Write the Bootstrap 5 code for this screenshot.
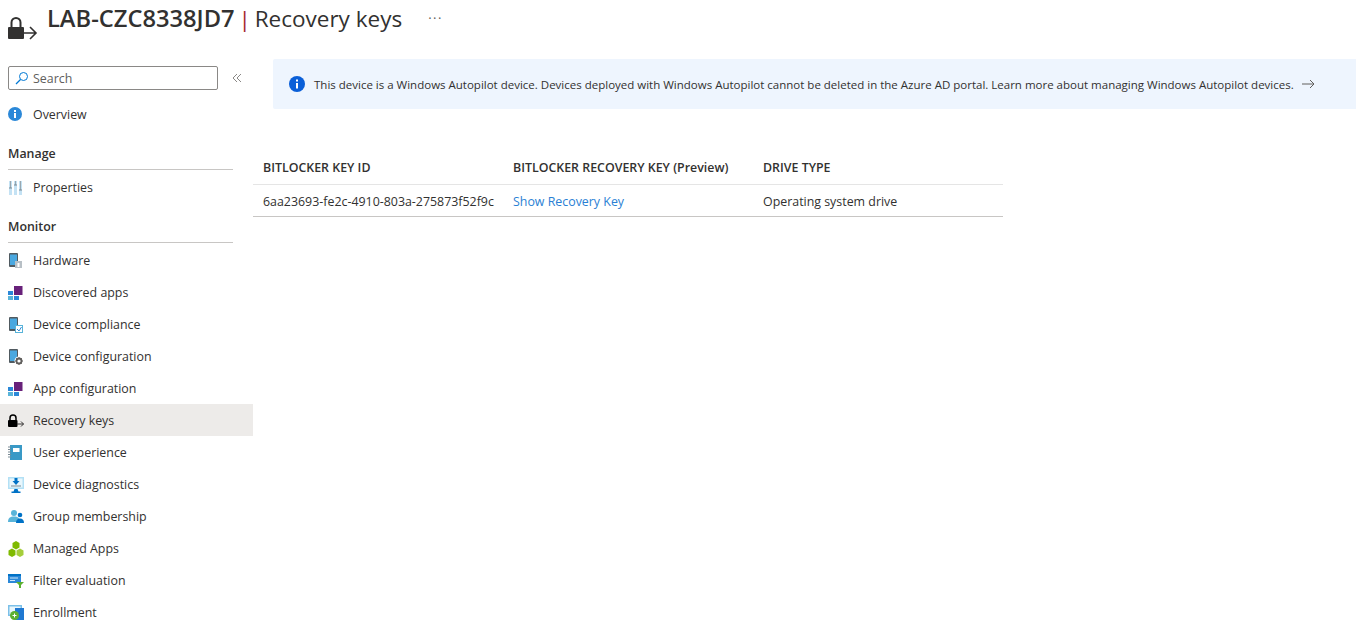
<!DOCTYPE html>
<html lang="en">
<head>
    <meta charset="UTF-8">
    <title>LAB-CZC8338JD7 | Recovery keys</title>
    <link href="https://cdn.jsdelivr.net/npm/bootstrap@5.3.0/dist/css/bootstrap.min.css" rel="stylesheet">
    <style>
        html, body { height: 634px; overflow: hidden; }
        body { font-family: "Open Sans", "Liberation Sans", sans-serif; font-size: 12.4px; color: #323130; background: #fff; }
        .page-head { height: 59px; padding-left: 8px; }
        .head-icon { width: 30px; height: 30px; margin-top: 16px; margin-right: 9px; }
        .head-title { font-size: 22.5px; line-height: 30px; margin: 3px 0 0; font-weight: 400; color: #323130; }
        .head-title b { font-weight: 600; font-size: 23.7px; }
        .head-sep { color: #a4262c; margin: 0 -2px; }
        .head-more { margin: 8px 0 0 26px; font-size: 13px; line-height: 20px; color: #605e5c; letter-spacing: 1.5px; }
        .side { width: 253px; flex: none; }
        .search-row { padding: 7px 0 0 8px; height: 39px; }
        .search-box { width: 210px; height: 24px; border: 1px solid #8a8886; border-radius: 2px; padding: 3px 0 0 6px; color: #605e5c; }
        .search-box svg { margin-top: -3px; }
        .collapse-btn { width: 15px; margin-left: 12px; color: #8a8886; }
        .nav-row.list-group-item { height: 32px; padding: 3px 0 0 8px; color: #323130; border: 0; border-radius: 0; background: transparent; }
        .nav-row.is-on { background: #edebe9; }
        .nav-row svg { width: 16px; height: 16px; margin-right: 9px; margin-top: -2px; flex: none; }
        .nav-head { font-weight: 600; margin: 0 20px 1px 8px; height: 40px; line-height: 20px; padding-top: 14px; border-bottom: 1px solid #c8c6c4; }
        .main-pane { flex: 1; min-width: 0; }
        .info-bar { margin-left: 20px; height: 50px; background: #eef5fe; border-radius: 2px 0 0 2px; padding: 2px 0 0 16px; font-size: 11.5px; white-space: nowrap; }
        .info-bar svg.dot { width: 16px; height: 16px; margin-right: 9px; margin-top: -2px; flex: none; }
        .info-bar svg.go { width: 14px; height: 14px; margin-left: 7px; margin-top: -3px; }
        .key-table { width: 750px; margin: 42px 0 0; table-layout: fixed; color: #323130; }
        .key-table th { font-weight: 600; padding: 7px 0 5px 10px; height: 33px; border-bottom: 1px solid #e5e5e5; line-height: 20px; vertical-align: middle; }
        .key-table td { padding: 7px 0 4px 10px; height: 32px; border-bottom: 1px solid #c8c6c4; line-height: 20px; vertical-align: middle; white-space: nowrap; }
        .key-table a { color: #2a7fd4; text-decoration: none; }
    </style>
</head>
<body>

<!-- title row -->
<div class="page-head d-flex align-items-start">
    <svg class="head-icon" viewBox="0 0 30 30">
        <path d="M3.500 11V6.500a4.500 4.500 0 0 1 9 0V11" fill="none" stroke="#323130" stroke-width="2"/>
        <rect x="0" y="11" width="16" height="12" rx="1" fill="#323130"/>
        <path d="M16 17h11.500M22 11l6 6-6 6" fill="none" stroke="#323130" stroke-width="1.600"/>
    </svg>
    <h1 class="head-title"><b>LAB-CZC8338JD7</b> <span class="head-sep">|</span> Recovery keys</h1>
    <div class="head-more">···</div>
</div>

<div class="d-flex">
    <!-- left menu -->
    <div class="side">
        <div class="search-row d-flex align-items-start">
            <div class="search-box d-flex align-items-center gap-1">
                <svg width="14" height="14" viewBox="0 0 14 14"><circle cx="8.500" cy="5.500" r="4" fill="none" stroke="#0078d4"/><path d="M5.500 8.500 1 13" stroke="#0078d4" stroke-width="1.200"/></svg>
                <span>Search</span>
            </div>
            <svg class="collapse-btn" height="24" viewBox="0 0 15 24"><path d="M7 8l-4 4 4 4M11 8l-4 4 4 4" fill="none" stroke="#8a8886"/></svg>
        </div>

        <div class="list-group">
            <div class="list-group-item nav-row d-flex align-items-center">
                <svg viewBox="0 0 16 16"><circle cx="7" cy="7" r="7" fill="#2b88d8"/><rect x="6" y="6" width="2" height="5" fill="#fff"/><rect x="6" y="3" width="2" height="2" fill="#fff"/></svg>
                Overview
            </div>
        </div>

        <div class="nav-head">Manage</div>
        <div class="list-group">
            <div class="list-group-item nav-row d-flex align-items-center">
                <svg viewBox="0 0 16 16"><path d="M1 1h3v14H1zM6 1h3v14H6zM11 1h3v14h-3z" fill="#c4e2f4"/><path d="M2.500 1v7M7.500 1v4M12.500 1v9" stroke="#9aa8b0"/><path d="M1 8h3M6 5h3M11 10h3" stroke="#7a8a94"/></svg>
                Properties
            </div>
        </div>

        <div class="nav-head">Monitor</div>
        <div class="list-group" id="monitorList"></div>
    </div>

    <!-- content -->
    <div class="main-pane">
        <div class="info-bar d-flex align-items-center">
            <svg class="dot" viewBox="0 0 16 16"><circle cx="8" cy="8" r="8" fill="#0a5fd8"/><rect x="7" y="7" width="2" height="5.500" fill="#fff"/><rect x="7" y="3.500" width="2" height="2" fill="#fff"/></svg>
            <span>This device is a Windows Autopilot device. Devices deployed with Windows Autopilot cannot be deleted in the Azure AD portal. Learn more about managing Windows Autopilot devices.</span>
            <svg class="go" viewBox="0 0 14 14"><path d="M1 7h12M9 3l4 4-4 4" fill="none" stroke="#605e5c"/></svg>
        </div>

        <table class="table table-borderless key-table">
            <thead>
                <tr><th>BITLOCKER KEY ID</th><th>BITLOCKER RECOVERY KEY (Preview)</th><th>DRIVE TYPE</th></tr>
            </thead>
            <tbody>
                <tr><td>6aa23693-fe2c-4910-803a-275873f52f9c</td><td><a href="#">Show Recovery Key</a></td><td>Operating system drive</td></tr>
            </tbody>
        </table>
    </div>
</div>

<script>
    // phone shape shared by the device items
    const phone = (extra) => `<rect x="1" y="0" width="9" height="14" rx="1" fill="#505a60"/><rect x="2" y="1.500" width="7" height="10.500" fill="#4aa8e0"/>${extra}`;
    const apps = `<rect x="0" y="6" width="5" height="4" fill="#2b88d8"/><rect x="0" y="11" width="5" height="4" fill="#59b4d9"/><rect x="6" y="11" width="5" height="4" fill="#2b88d8"/><rect x="6" y="1" width="8.500" height="9" fill="#68217a"/>`;

    const items = [
        ['Hardware', phone(`<rect x="7" y="8" width="7" height="7" fill="#b8c0c6"/><rect x="9.500" y="10" width="2" height="4" fill="#fff"/>`)],
        ['Discovered apps', apps],
        ['Device compliance', phone(`<rect x="7.500" y="8.500" width="7" height="7" fill="#fff" stroke="#59b4d9"/><path d="M9 12l2 2 2.500-4" fill="none" stroke="#2b88d8"/>`)],
        ['Device configuration', phone(`<circle cx="11" cy="12" r="4.500" fill="#fff"/><circle cx="11" cy="12" r="2.500" fill="none" stroke="#605e5c" stroke-width="1.800"/><path d="M11 8v8M7 12h8M8.200 9.200l5.600 5.600M13.800 9.200l-5.600 5.600" stroke="#605e5c" stroke-dasharray="1.500 5"/>`)],
        ['App configuration', apps],
        ['Recovery keys', `<path d="M2 7V5a3 3 0 0 1 6 0v2" fill="none" stroke="#000" stroke-width="1.500"/><rect x="0" y="7" width="9.500" height="7" rx="1" fill="#000"/><path d="M9 11h6.500M13 8.500l2.500 2.500-2.500 2.500" fill="none" stroke="#323130"/>`],
        ['User experience', `<rect x="2" y="0" width="12" height="15" fill="#3999c6"/><rect x="5" y="3" width="6.500" height="4" fill="#fff"/><path d="M0 2h3M0 4.500h3M0 7h3M0 9.500h3M0 12h3" stroke="#7a8a94"/>`],
        ['Device diagnostics', `<rect x="0" y="0" width="16" height="12" fill="#b3e0f5"/><rect x="1.500" y="1.500" width="13" height="9" fill="#e8f6fc"/><path d="M6.500 1h3v3h2L8 8 4.500 4h2z" fill="#0072c6"/><rect x="3" y="8.500" width="10" height="1" fill="#7a8a94"/><path d="M6.500 12h3l1 2.500h2V16h-9v-1.500h2z" fill="#0072c6"/>`],
        ['Group membership', `<circle cx="6" cy="4" r="3" fill="#59b4d9"/><path d="M0 13c0-4 2-5.500 6-5.500s6 1.500 6 5.500z" fill="#59b4d9"/><circle cx="12" cy="6" r="2.300" fill="#0072c6"/><path d="M8 14c0-3 1.500-4.500 4-4.500s4 1.500 4 4.500z" fill="#0072c6"/>`],
        ['Managed Apps', `<path d="M8 0l3.500 2v4.500L8 8.500 4.500 6.500V2z" fill="#7fba00"/><path d="M4 7.500l3.500 2V14L4 16 .5 14V9.500z" fill="#7fba00"/><path d="M12 7.500l3.500 2V14L12 16l-3.500-2V9.500z" fill="#a5ce3a"/>`],
        ['Filter evaluation', `<rect x="0" y="1" width="13" height="9" fill="#2b88d8"/><rect x="0" y="1" width="13" height="2" fill="#0072c6"/><path d="M2 5h8M2 7.500h5" stroke="#cfe8f8"/><path d="M8 9h8l-3 3v3h-2v-3z" fill="#5cb030"/>`],
        ['Enrollment', `<rect x="0" y="0" width="14" height="11" fill="#7cc0e8"/><rect x="1.500" y="1.500" width="11" height="8" fill="#e8f6fc"/><rect x="7" y="3" width="9" height="12" fill="#1f78d1"/><circle cx="6.500" cy="10.500" r="4.500" fill="#5cb030"/><path d="M6.500 8.500v4M4.500 10.500h4" stroke="#fff"/>`]
    ];

    const list = document.getElementById('monitorList');
    items.forEach(([name, icon]) => {
        const row = document.createElement('div');
        row.className = 'list-group-item nav-row d-flex align-items-center' + (name === 'Recovery keys' ? ' is-on' : '');
        row.innerHTML = `<svg viewBox="0 0 16 16">${icon}</svg>${name}`;
        list.appendChild(row);
    });
</script>

<script src="https://cdn.jsdelivr.net/npm/bootstrap@5.3.0/dist/js/bootstrap.bundle.min.js"></script>
</body>
</html>
